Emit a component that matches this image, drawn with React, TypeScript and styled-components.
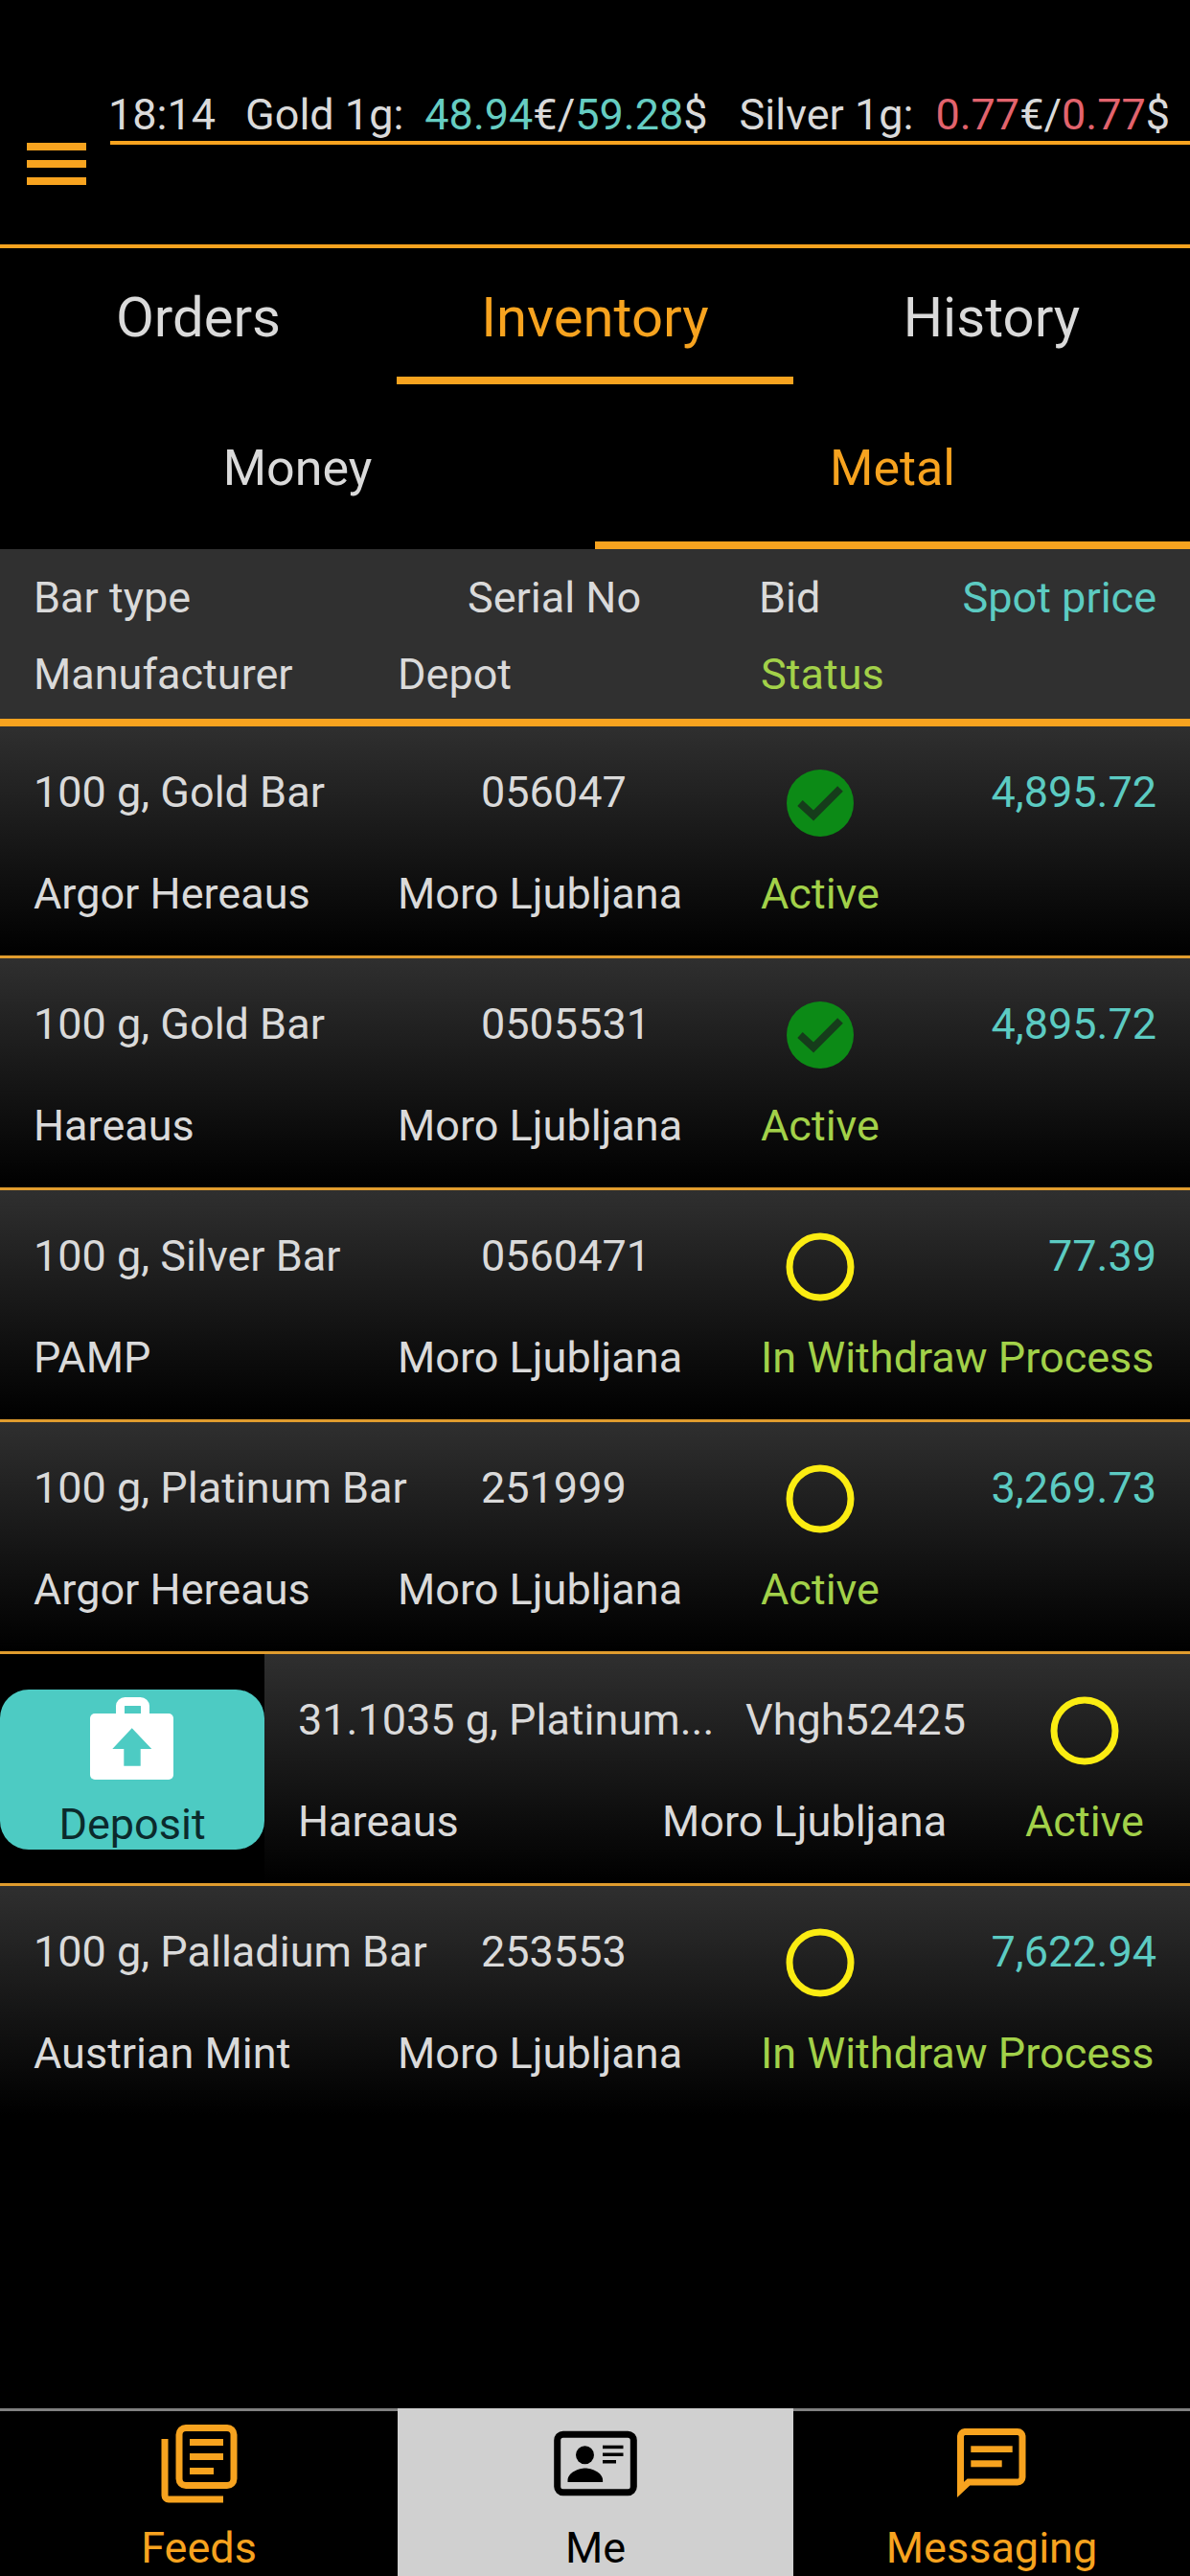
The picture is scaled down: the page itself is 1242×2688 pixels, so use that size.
import React from 'react';
import styled, { createGlobalStyle } from 'styled-components';

const ORANGE = '#f7a31f';
const TEAL = '#5ccbc2';
const GREEN = '#a2d149';
const TEXT = '#dadada';

const GlobalStyle = createGlobalStyle`
  html, body {
    margin: 0;
    padding: 0;
    background: #000;
  }
  body {
    font-family: Roboto, "Liberation Sans", sans-serif;
  }
`;

const Page = styled.div`
  width: 1242px;
  height: 2688px;
  display: flex;
  flex-direction: column;
  overflow: hidden;
  background: #000;
`;

const Header = styled.header`
  height: 255px;
  display: flex;
  border-bottom: 4px solid ${ORANGE};
`;

const Menu = styled.div`
  width: 62px;
  margin: 149px 25px 0 28px;
  display: flex;
  flex-direction: column;
  gap: 10px;
`;

const MenuBar = styled.span`
  height: 8px;
  background: ${ORANGE};
`;

const Ticker = styled.div`
  flex: 1;
  height: 151px;
  padding: 92px 0 0;
  box-sizing: border-box;
  display: flex;
  font-size: 45px;
  line-height: 55px;
  color: ${TEXT};
  white-space: nowrap;
  border-bottom: 4px solid ${ORANGE};
`;

const TickerPart = styled.span<{ $gap: number }>`
  margin-left: ${(p) => p.$gap}px;
`;

const Price = styled.span<{ $color: string }>`
  color: ${(p) => p.$color};
`;

const MainTabs = styled.nav`
  display: grid;
  grid-template-columns: repeat(3, 1fr);
  height: 142px;
`;

const MainTab = styled.div<{ $active?: boolean }>`
  display: flex;
  justify-content: center;
  padding-top: 35px;
  box-sizing: border-box;
  font-size: 58px;
  line-height: 74px;
  color: ${(p) => (p.$active ? ORANGE : TEXT)};
  border-bottom: 8px solid ${(p) => (p.$active ? ORANGE : 'transparent')};
`;

const SubTabs = styled.nav`
  display: grid;
  grid-template-columns: 1fr 1fr;
  height: 172px;
`;

const SubTab = styled.div<{ $active?: boolean }>`
  display: flex;
  justify-content: center;
  padding-top: 58px;
  box-sizing: border-box;
  font-size: 52px;
  line-height: 60px;
  color: ${(p) => (p.$active ? ORANGE : TEXT)};
  border-bottom: 8px solid ${(p) => (p.$active ? ORANGE : 'transparent')};
`;

const TableHead = styled.div`
  height: 185px;
  box-sizing: border-box;
  padding-top: 19px;
  background: #303030;
  border-bottom: 8px solid ${ORANGE};
  display: flex;
  flex-direction: column;
  gap: 16px;
`;

const TopLine = styled.div`
  display: grid;
  grid-template-columns: 432px 325px 126px 1fr;
  height: 64px;
  padding: 0 35px;
  font-size: 45px;
  line-height: 64px;
  color: ${TEXT};
  white-space: nowrap;
`;

const BottomLine = styled.div`
  display: grid;
  grid-template-columns: 380px 379px 1fr;
  height: 64px;
  padding: 0 35px;
  font-size: 45px;
  line-height: 64px;
  color: ${TEXT};
  white-space: nowrap;
`;

const Serial = styled.div<{ $inset: number }>`
  padding-left: ${(p) => p.$inset}px;
`;

const Spot = styled.div`
  text-align: right;
  color: ${TEAL};
`;

const Status = styled.div`
  color: ${GREEN};
`;

const Row = styled.div<{ $last?: boolean }>`
  display: flex;
  height: 242px;
  box-sizing: border-box;
  border-bottom: 3px solid ${(p) => (p.$last ? 'transparent' : '#e09c2e')};
  overflow: hidden;
`;

const RowBody = styled.div`
  flex: 0 0 1242px;
  box-sizing: border-box;
  padding-top: 37px;
  display: flex;
  flex-direction: column;
  gap: 42px;
  background: linear-gradient(#2f2f2f, #000);
`;

const Action = styled.div`
  flex: 0 0 276px;
  padding-top: 37px;
  background: #000;
`;

const DepositButton = styled.div`
  height: 167px;
  box-sizing: border-box;
  padding-top: 5px;
  display: flex;
  flex-direction: column;
  align-items: center;
  background: #4dcbc3;
  border-radius: 30px;
  font-size: 45px;
  line-height: 50px;
  color: #0b2a2c;
`;

const DepositIcon = styled.svg`
  width: 100px;
  height: 100px;
  margin-bottom: 11px;
  flex: none;
`;

const StatusCell = styled.svg`
  width: 76px;
  height: 76px;
  margin: 5px 0 0 26px;
  overflow: visible;
`;

const Spacer = styled.div`
  flex: 1;
`;

const BottomNav = styled.nav`
  display: grid;
  grid-template-columns: 415px 413px 414px;
  height: 175px;
`;

const NavItem = styled.div<{ $active?: boolean }>`
  display: flex;
  flex-direction: column;
  align-items: center;
  border-top: 3px solid ${(p) => (p.$active ? '#d0d0d0' : '#808080')};
  background: ${(p) => (p.$active ? '#d0d0d0' : '#000')};
  color: ${(p) => (p.$active ? '#000' : ORANGE)};
  font-size: 45px;
  line-height: 50px;
`;

const NavIcon = styled.svg`
  width: 110px;
  height: 110px;
  margin: -1px 0 9px;
  flex: none;
`;

interface Holding {
  type: string;
  serial: string;
  verified: boolean;
  spot?: string;
  maker: string;
  status: string;
  swiped?: boolean;
}

const holdings: Holding[] = [
  { type: '100 g, Gold Bar', serial: '056047', verified: true, spot: '4,895.72', maker: 'Argor Hereaus', status: 'Active' },
  { type: '100 g, Gold Bar', serial: '0505531', verified: true, spot: '4,895.72', maker: 'Hareaus', status: 'Active' },
  { type: '100 g, Silver Bar', serial: '0560471', verified: false, spot: '77.39', maker: 'PAMP', status: 'In Withdraw Process' },
  { type: '100 g, Platinum Bar', serial: '251999', verified: false, spot: '3,269.73', maker: 'Argor Hereaus', status: 'Active' },
  { type: '31.1035 g, Platinum...', serial: 'Vhgh52425', verified: false, maker: 'Hareaus', status: 'Active', swiped: true },
  { type: '100 g, Palladium Bar', serial: '253553', verified: false, spot: '7,622.94', maker: 'Austrian Mint', status: 'In Withdraw Process' },
];

const StatusIcon: React.FC<{ verified: boolean }> = ({ verified }) => (
  <StatusCell viewBox="-38 -38 76 76">
    {verified ? (
      <>
        <circle r="35" fill="#0c8a16" />
        <path d="M-21 0 L-7 13 L21 -15" fill="none" stroke="#163c1b" strokeWidth="8" />
      </>
    ) : (
      <circle r="32" fill="none" stroke="#fbec12" strokeWidth="7" />
    )}
  </StatusCell>
);

const App: React.FC = () => {
  return (
    <Page>
      <GlobalStyle />
      <Header>
        <Menu>
          <MenuBar />
          <MenuBar />
          <MenuBar />
        </Menu>
        <Ticker>
          <TickerPart $gap={-2}>18:14</TickerPart>
          <TickerPart $gap={31}>Gold 1g:</TickerPart>
          <TickerPart $gap={22}>
            <Price $color="#66cdc2">48.94</Price>€/<Price $color="#66cdc2">59.28</Price>$
          </TickerPart>
          <TickerPart $gap={33}>Silver 1g:</TickerPart>
          <TickerPart $gap={23}>
            <Price $color="#e2636d">0.77</Price>€/<Price $color="#e2636d">0.77</Price>$
          </TickerPart>
        </Ticker>
      </Header>

      <MainTabs>
        <MainTab>Orders</MainTab>
        <MainTab $active>Inventory</MainTab>
        <MainTab>History</MainTab>
      </MainTabs>

      <SubTabs>
        <SubTab>Money</SubTab>
        <SubTab $active>Metal</SubTab>
      </SubTabs>

      <TableHead>
        <TopLine>
          <div>Bar type</div>
          <Serial $inset={21}>Serial No</Serial>
          <div>Bid</div>
          <Spot>Spot price</Spot>
        </TopLine>
        <BottomLine>
          <div>Manufacturer</div>
          <div>Depot</div>
          <Status>Status</Status>
        </BottomLine>
      </TableHead>

      {holdings.map((item, i) => (
        <Row key={item.serial} $last={i === holdings.length - 1}>
          {item.swiped && (
            <Action>
              <DepositButton>
                <DepositIcon viewBox="0 0 100 100">
                  <rect x="37.5" y="7.5" width="26" height="20" rx="5" fill="#4dcbc3" stroke="#fff" strokeWidth="9" />
                  <rect x="6" y="20" width="87" height="69" rx="5" fill="#fff" />
                  <path d="M49.7 35.3 L70.3 57 H58.7 V74.7 H41.3 V57 H29.3 Z" fill="#4dcbc3" />
                </DepositIcon>
                Deposit
              </DepositButton>
            </Action>
          )}
          <RowBody>
            <TopLine>
              <div>{item.type}</div>
              <Serial $inset={35}>{item.serial}</Serial>
              <StatusIcon verified={item.verified} />
              <Spot>{item.spot}</Spot>
            </TopLine>
            <BottomLine>
              <div>{item.maker}</div>
              <div>Moro Ljubljana</div>
              <Status>{item.status}</Status>
            </BottomLine>
          </RowBody>
        </Row>
      ))}

      <Spacer />

      <BottomNav>
        <NavItem>
          <NavIcon viewBox="2 0 110 110" fill="none" stroke={ORANGE} strokeWidth="7">
            <rect x="36" y="18.5" width="57" height="60" rx="7" />
            <path d="M21 30 V89 a4 4 0 0 0 4 4 H82" />
            <rect x="47" y="30" width="35" height="7" fill={ORANGE} stroke="none" />
            <rect x="47" y="45" width="35" height="7" fill={ORANGE} stroke="none" />
            <rect x="47" y="60" width="25" height="7" fill={ORANGE} stroke="none" />
          </NavIcon>
          Feeds
        </NavItem>
        <NavItem $active>
          <NavIcon viewBox="1.5 0 110 110">
            <rect x="16.2" y="25.2" width="79.6" height="60.6" rx="6" fill="none" stroke="#000" strokeWidth="7" />
            <circle cx="45" cy="46.7" r="9.5" />
            <path d="M27 75 v-2 c0 -8 12 -12.5 18.3 -12.5 s18.3 4.5 18.3 12.5 v2 z" />
            <rect x="63.5" y="36.7" width="21.5" height="3.5" />
            <rect x="63.5" y="44.5" width="21.5" height="3.5" />
            <rect x="63.5" y="52" width="14" height="3.5" />
          </NavIcon>
          Me
        </NavItem>
        <NavItem>
          <NavIcon viewBox="0 0 110 110">
            <path
              d="M27 22.5 H82 a5 5 0 0 1 5 5 V70 a5 5 0 0 1 -5 5 H31 L22.5 83 V27.5 a5 5 0 0 1 4.5 -5 z"
              fill="none"
              stroke={ORANGE}
              strokeWidth="7"
            />
            <rect x="33.3" y="37.3" width="43.4" height="6.7" fill={ORANGE} />
            <rect x="33.3" y="52.3" width="32.4" height="7" fill={ORANGE} />
          </NavIcon>
          Messaging
        </NavItem>
      </BottomNav>
    </Page>
  );
};

export default App;
